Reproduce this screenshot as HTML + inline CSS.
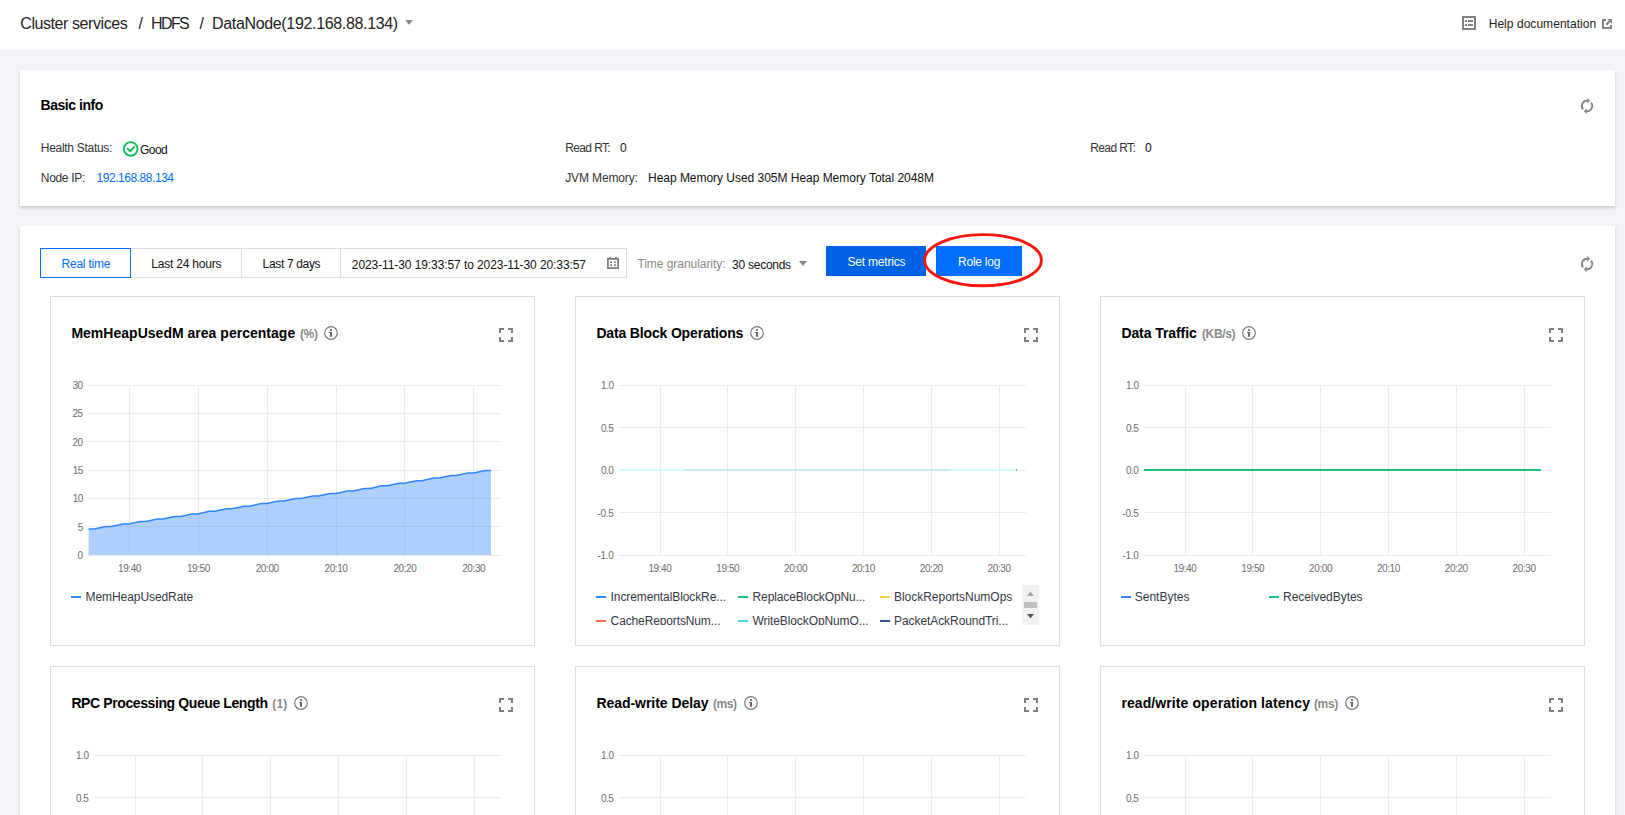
<!DOCTYPE html>
<html lang="en">
<head>
<meta charset="utf-8">
<title>DataNode(192.168.88.134) - HDFS - Cluster services</title>
<style>
html,body{margin:0;padding:0}
body{width:1625px;height:815px;overflow:hidden;position:relative;background:#f2f4f8;font-family:"Liberation Sans", Arial, sans-serif;font-size:12px;color:#000}
header.top{position:absolute;left:0;top:0;width:1625px;height:50px;background:#fff}
.card{position:absolute;background:#fff;box-shadow:0 2px 3px 0 rgba(20,22,30,.2)}
.layer{position:absolute;left:0;top:0;width:0;height:0}
.t{position:absolute;white-space:pre;line-height:1;margin:0}
.ico{position:absolute;overflow:visible}
.seg{position:absolute;box-sizing:border-box;border:1px solid #dddddd;background:#fff}
.segsep{position:absolute;width:1px;height:30px;background:#dddddd}
.segsel{position:absolute;box-sizing:border-box;border:1px solid #006eff;background:#fff}
.btn{position:absolute}
.panel{position:absolute;box-sizing:border-box;width:485px;height:350px;border:1px solid #dddddd;background:#fff}
.lm{position:absolute;width:10px;height:2px}
.legclip{position:absolute;overflow:hidden}
.legclip .t,.legclip .lm{margin-left:-590px;margin-top:-585px}
.sb{position:absolute;right:0;top:0;width:17px;height:40px;background:#f1f1f1}
</style>
</head>
<body>
<header class="top">
<span class="t" style="left:20.30px;top:16px;font-size:16px;color:#222;letter-spacing:-0.427px;">Cluster services</span>
<span class="t" style="left:138.50px;top:16px;font-size:16px;color:#222;">/</span>
<span class="t" style="left:151.00px;top:16px;font-size:16px;color:#222;letter-spacing:-1.589px;">HDFS</span>
<span class="t" style="left:199.50px;top:16px;font-size:16px;color:#222;">/</span>
<span class="t" style="left:212.00px;top:16px;font-size:16px;color:#222;letter-spacing:-0.337px;">DataNode(192.168.88.134)</span>
<svg class="ico" style="left:405px;top:20px" width="8" height="5" viewBox="0 0 8 5"><path d="M0 0H8L4 4.7Z" fill="#888"/></svg>
<svg class="ico" style="left:1462px;top:16px" width="14" height="14" viewBox="0 0 14 14"><rect x="1" y="1" width="12" height="12" fill="none" stroke="#808080" stroke-width="2"/><rect x="3" y="4" width="2" height="2" fill="#808080"/><rect x="6" y="4" width="5" height="2" fill="#808080"/><rect x="3" y="8" width="2" height="2" fill="#808080"/><rect x="6" y="8" width="5" height="2" fill="#808080"/></svg>
<span class="t" style="left:1488.70px;top:18px;font-size:12px;color:#222;letter-spacing:0.044px;">Help documentation</span>
<svg class="ico" style="left:1602px;top:19px" width="10" height="10" viewBox="0 0 10 10"><path d="M4 1H1V9H9V6" fill="none" stroke="#808080" stroke-width="2"/><path d="M5.3 0H10V4.7Z" fill="#808080"/><path d="M8.6 1.4L4.2 5.8" stroke="#808080" stroke-width="2" fill="none"/></svg>
</header>
<section class="card" style="left:20px;top:70px;width:1595px;height:136px"></section>
<section class="layer">
<span class="t" style="left:40.60px;top:98px;font-size:14px;color:#000;font-weight:700;letter-spacing:-0.474px;">Basic info</span>
<span class="t" style="left:40.80px;top:142px;font-size:12px;color:#333;letter-spacing:-0.294px;">Health Status:</span>
<svg class="ico" style="left:122px;top:140px" width="18" height="18" viewBox="0 0 18 18"><circle cx="8.7" cy="8.9" r="6.85" fill="none" stroke="#0abf5b" stroke-width="1.8"/><path d="M5.7 8.9L8.1 11.2L12.1 6.9" fill="none" stroke="#0abf5b" stroke-width="2" stroke-linecap="round" stroke-linejoin="round"/></svg>
<span class="t" style="left:140.00px;top:144px;font-size:12px;color:#111;letter-spacing:-0.531px;">Good</span>
<span class="t" style="left:40.80px;top:172px;font-size:12px;color:#333;letter-spacing:-0.320px;">Node IP:</span>
<span class="t" style="left:96.50px;top:172px;font-size:12px;color:#006eff;letter-spacing:-0.453px;">192.168.88.134</span>
<span class="t" style="left:565.20px;top:142px;font-size:12px;color:#333;letter-spacing:-0.615px;">Read RT:</span>
<span class="t" style="left:620.00px;top:142px;font-size:12px;color:#111;">0</span>
<span class="t" style="left:565.20px;top:172px;font-size:12px;color:#333;letter-spacing:-0.125px;">JVM Memory:</span>
<span class="t" style="left:648.00px;top:172px;font-size:12px;color:#111;letter-spacing:-0.028px;">Heap Memory Used 305M Heap Memory Total 2048M</span>
<span class="t" style="left:1090.20px;top:142px;font-size:12px;color:#333;letter-spacing:-0.602px;">Read RT:</span>
<span class="t" style="left:1145.00px;top:142px;font-size:12px;color:#111;">0</span>
<svg class="ico" style="left:0;top:0" width="1625" height="815"><g fill="none" stroke="#858585" stroke-width="1.9"><path d="M1583.02 109.34A5.20 5.20 0 0 1 1587.40 100.80"/><path d="M1590.98 102.66A5.20 5.20 0 0 1 1586.60 111.20"/></g><path d="M1587.20 97.90V103.70L1590.10 100.80Z" fill="#868686"/><path d="M1586.80 108.30V114.10L1583.90 111.20Z" fill="#868686"/></svg>
</section>
<section class="card" style="left:20px;top:226px;width:1595px;height:620px"></section>
<section class="layer">
<div class="seg" style="left:40px;top:248px;width:587px;height:30px"></div>
<div class="segsep" style="left:241px;top:248px"></div><div class="segsep" style="left:340px;top:248px"></div>
<div class="segsel" style="left:40px;top:248px;width:91px;height:30px"></div>
<span class="t" style="left:61.60px;top:258px;font-size:12px;color:#006eff;letter-spacing:-0.246px;">Real time</span>
<span class="t" style="left:151.30px;top:258px;font-size:12px;color:#111;letter-spacing:-0.210px;">Last 24 hours</span>
<span class="t" style="left:262.60px;top:258px;font-size:12px;color:#111;letter-spacing:-0.340px;">Last 7 days</span>
<span class="t" style="left:351.80px;top:259px;font-size:12px;color:#111;letter-spacing:-0.086px;">2023-11-30 19:33:57 to 2023-11-30 20:33:57</span>
<svg class="ico" style="left:607px;top:256px" width="12" height="13" viewBox="0 0 12 13"><rect x="0.9" y="2.9" width="10.2" height="9.2" fill="none" stroke="#808080" stroke-width="1.8"/><rect x="2" y="1" width="2" height="1.2" fill="#808080"/><rect x="8" y="1" width="2" height="1.2" fill="#808080"/><rect x="3.2" y="5.3" width="1.8" height="1.8" fill="#808080"/><rect x="7.1" y="5.3" width="1.8" height="1.8" fill="#808080"/><rect x="3.2" y="8.3" width="1.8" height="1.8" fill="#808080"/><rect x="7.1" y="8.3" width="1.8" height="1.8" fill="#808080"/></svg>
<span class="t" style="left:637.40px;top:258px;font-size:12px;color:#888;letter-spacing:-0.050px;">Time granularity:</span>
<span class="t" style="left:732.10px;top:259px;font-size:12px;color:#111;letter-spacing:-0.262px;">30 seconds</span>
<svg class="ico" style="left:798.6px;top:261px" width="8" height="5" viewBox="0 0 8 5"><path d="M0 0H8L4 4.9Z" fill="#888"/></svg>
<div class="btn" style="left:826px;top:246px;width:100px;height:30px;background:#0063e5"></div>
<div class="btn" style="left:936px;top:246px;width:86px;height:30px;background:#006eff"></div>
<span class="t" style="left:847.40px;top:256px;font-size:12px;color:#fff;letter-spacing:-0.192px;">Set metrics</span>
<span class="t" style="left:958.00px;top:256px;font-size:12px;color:#fff;letter-spacing:-0.231px;">Role log</span>
<svg class="ico" style="left:915px;top:226px" width="140" height="70" viewBox="915 226 140 70"><ellipse cx="983" cy="260.2" rx="58.4" ry="25.6" fill="none" stroke="#f8170f" stroke-width="2.9"/></svg>
<svg class="ico" style="left:0;top:0" width="1625" height="815"><g fill="none" stroke="#858585" stroke-width="1.9"><path d="M1583.02 267.34A5.20 5.20 0 0 1 1587.40 258.80"/><path d="M1590.98 260.66A5.20 5.20 0 0 1 1586.60 269.20"/></g><path d="M1587.20 255.90V261.70L1590.10 258.80Z" fill="#868686"/><path d="M1586.80 266.30V272.10L1583.90 269.20Z" fill="#868686"/></svg>
<div class="panel" style="left:50px;top:296px"></div><span class="t" style="left:71.40px;top:326px;font-size:14px;color:#000;font-weight:700;letter-spacing:0.018px;">MemHeapUsedM area percentage</span><span class="t" style="left:299.90px;top:328px;font-size:12px;color:#888;font-weight:700;letter-spacing:-0.309px;">(%)</span><svg class="ico" style="left:323.0px;top:325.0px" width="16" height="16" viewBox="0 0 16 16"><circle cx="8" cy="8" r="6.3" fill="none" stroke="#7d7d7d" stroke-width="1.2"/><rect x="7" y="4.2" width="2" height="1.7" fill="#666"/><path d="M5.9 6.9H9V11.7H7V7.9H5.9Z" fill="#666"/></svg><svg class="ico" style="left:499px;top:328px" width="14" height="14" viewBox="0 0 14 14"><path d="M1 5V1H5M9 1H13V5M13 9V13H9M5 13H1V9" fill="none" stroke="#7e7e7e" stroke-width="2"/></svg><svg class="ico" style="left:0;top:0" width="1625" height="815"><g fill="#ebebeb" shape-rendering="crispEdges"><rect x="88" y="385" width="413" height="1"/><rect x="88" y="413" width="413" height="1"/><rect x="88" y="441" width="413" height="1"/><rect x="88" y="470" width="413" height="1"/><rect x="88" y="498" width="413" height="1"/><rect x="88" y="526" width="413" height="1"/><rect x="88" y="555" width="413" height="1"/><rect x="129" y="385" width="1" height="171"/><rect x="198" y="385" width="1" height="171"/><rect x="267" y="385" width="1" height="171"/><rect x="336" y="385" width="1" height="171"/><rect x="404" y="385" width="1" height="171"/><rect x="473" y="385" width="1" height="171"/></g><path d="M88.6 529.1L94.1 529.1L105.9 526.6L111.4 526.6L123.1 524.0L128.6 524.0L140.4 521.5L145.9 521.5L157.6 519.0L163.1 519.0L174.9 516.4L180.4 516.4L192.1 513.9L197.6 513.9L209.4 511.3L214.9 511.3L226.7 508.8L232.2 508.8L243.9 506.2L249.4 506.2L261.2 503.6L266.7 503.6L278.4 501.1L283.9 501.1L295.7 498.6L301.2 498.6L312.9 496.0L318.4 496.0L330.2 493.4L335.7 493.4L347.4 490.9L352.9 490.9L364.7 488.4L370.2 488.4L382.0 485.8L387.5 485.8L399.2 483.2L404.7 483.2L416.5 480.7L422.0 480.7L433.7 478.1L439.2 478.1L451.0 475.6L456.5 475.6L468.2 473.1L473.7 473.1L485.5 470.5L491.0 470.5L491.0 555.0L88.6 555.0Z" fill="rgba(50,138,255,0.40)"/><path d="M88.6 529.1L94.1 529.1L105.9 526.6L111.4 526.6L123.1 524.0L128.6 524.0L140.4 521.5L145.9 521.5L157.6 519.0L163.1 519.0L174.9 516.4L180.4 516.4L192.1 513.9L197.6 513.9L209.4 511.3L214.9 511.3L226.7 508.8L232.2 508.8L243.9 506.2L249.4 506.2L261.2 503.6L266.7 503.6L278.4 501.1L283.9 501.1L295.7 498.6L301.2 498.6L312.9 496.0L318.4 496.0L330.2 493.4L335.7 493.4L347.4 490.9L352.9 490.9L364.7 488.4L370.2 488.4L382.0 485.8L387.5 485.8L399.2 483.2L404.7 483.2L416.5 480.7L422.0 480.7L433.7 478.1L439.2 478.1L451.0 475.6L456.5 475.6L468.2 473.1L473.7 473.1L485.5 470.5L491.0 470.5" fill="none" stroke="#2e87ff" stroke-width="1.5" stroke-linejoin="round"/></svg><span class="t" style="left:72.40px;top:381px;font-size:10px;color:#6c6c6c;letter-spacing:-0.350px;">30</span><span class="t" style="left:72.40px;top:409px;font-size:10px;color:#6c6c6c;letter-spacing:-0.350px;">25</span><span class="t" style="left:72.40px;top:438px;font-size:10px;color:#6c6c6c;letter-spacing:-0.350px;">20</span><span class="t" style="left:72.80px;top:466px;font-size:10px;color:#6c6c6c;letter-spacing:-0.617px;">15</span><span class="t" style="left:72.80px;top:494px;font-size:10px;color:#6c6c6c;letter-spacing:-0.617px;">10</span><span class="t" style="left:77.80px;top:523px;font-size:10px;color:#6c6c6c;">5</span><span class="t" style="left:77.60px;top:551px;font-size:10px;color:#6c6c6c;">0</span><span class="t" style="left:118.04px;top:564px;font-size:10px;color:#6c6c6c;letter-spacing:-0.407px;">19:40</span><span class="t" style="left:186.88px;top:564px;font-size:10px;color:#6c6c6c;letter-spacing:-0.407px;">19:50</span><span class="t" style="left:255.71px;top:564px;font-size:10px;color:#6c6c6c;letter-spacing:-0.407px;">20:00</span><span class="t" style="left:324.54px;top:564px;font-size:10px;color:#6c6c6c;letter-spacing:-0.407px;">20:10</span><span class="t" style="left:393.38px;top:564px;font-size:10px;color:#6c6c6c;letter-spacing:-0.407px;">20:20</span><span class="t" style="left:462.21px;top:564px;font-size:10px;color:#6c6c6c;letter-spacing:-0.407px;">20:30</span>
<div class="lm" style="left:71px;top:596px;background:#2f86ff"></div><span class="t" style="left:85.60px;top:591px;font-size:12px;color:#353844;letter-spacing:-0.077px;">MemHeapUsedRate</span>
<div class="panel" style="left:575px;top:296px"></div><span class="t" style="left:596.40px;top:326px;font-size:14px;color:#000;font-weight:700;letter-spacing:-0.159px;">Data Block Operations</span><svg class="ico" style="left:748.8px;top:325.0px" width="16" height="16" viewBox="0 0 16 16"><circle cx="8" cy="8" r="6.3" fill="none" stroke="#7d7d7d" stroke-width="1.2"/><rect x="7" y="4.2" width="2" height="1.7" fill="#666"/><path d="M5.9 6.9H9V11.7H7V7.9H5.9Z" fill="#666"/></svg><svg class="ico" style="left:1024px;top:328px" width="14" height="14" viewBox="0 0 14 14"><path d="M1 5V1H5M9 1H13V5M13 9V13H9M5 13H1V9" fill="none" stroke="#7e7e7e" stroke-width="2"/></svg><svg class="ico" style="left:0;top:0" width="1625" height="815"><g fill="#ebebeb" shape-rendering="crispEdges"><rect x="619" y="385" width="407" height="1"/><rect x="619" y="427" width="407" height="1"/><rect x="619" y="470" width="407" height="1"/><rect x="619" y="512" width="407" height="1"/><rect x="619" y="555" width="407" height="1"/><rect x="660" y="385" width="1" height="171"/><rect x="727" y="385" width="1" height="171"/><rect x="795" y="385" width="1" height="171"/><rect x="863" y="385" width="1" height="171"/><rect x="931" y="385" width="1" height="171"/><rect x="999" y="385" width="1" height="171"/></g><path d="M619.0 470.0H1016.0" stroke="#ccfefe" stroke-width="2"/><path d="M685.0 470.0H949.5" stroke="#c4eafa" stroke-width="2"/><rect x="1016.0" y="469.0" width="1" height="2" fill="#8a96b8"/></svg><span class="t" style="left:601.10px;top:381px;font-size:10px;color:#6c6c6c;letter-spacing:-0.522px;">1.0</span><span class="t" style="left:600.90px;top:424px;font-size:10px;color:#6c6c6c;letter-spacing:-0.443px;">0.5</span><span class="t" style="left:600.90px;top:466px;font-size:10px;color:#6c6c6c;letter-spacing:-0.443px;">0.0</span><span class="t" style="left:597.30px;top:509px;font-size:10px;color:#6c6c6c;letter-spacing:-0.238px;">-0.5</span><span class="t" style="left:597.50px;top:551px;font-size:10px;color:#6c6c6c;letter-spacing:-0.296px;">-1.0</span><span class="t" style="left:648.44px;top:564px;font-size:10px;color:#6c6c6c;letter-spacing:-0.407px;">19:40</span><span class="t" style="left:716.27px;top:564px;font-size:10px;color:#6c6c6c;letter-spacing:-0.407px;">19:50</span><span class="t" style="left:784.11px;top:564px;font-size:10px;color:#6c6c6c;letter-spacing:-0.407px;">20:00</span><span class="t" style="left:851.94px;top:564px;font-size:10px;color:#6c6c6c;letter-spacing:-0.407px;">20:10</span><span class="t" style="left:919.77px;top:564px;font-size:10px;color:#6c6c6c;letter-spacing:-0.407px;">20:20</span><span class="t" style="left:987.61px;top:564px;font-size:10px;color:#6c6c6c;letter-spacing:-0.407px;">20:30</span>
<div class="legclip" style="left:590px;top:585px;width:449px;height:40px">
<div class="sb"><svg width="17" height="40" viewBox="0 0 17 40"><path d="M5 11L8.5 6.8L12 11Z" fill="#a3a3a3"/><rect x="2" y="17" width="13" height="6" fill="#c1c1c1"/><path d="M5 29L8.5 33.2L12 29Z" fill="#505050"/></svg></div>
<div class="lm" style="left:596px;top:596px;background:#2f86ff"></div><span class="t" style="left:610.60px;top:591px;font-size:12px;color:#353844;letter-spacing:-0.097px;">IncrementalBlockRe...</span>
<div class="lm" style="left:738px;top:596px;background:#1dc47e"></div><span class="t" style="left:752.50px;top:591px;font-size:12px;color:#353844;letter-spacing:-0.099px;">ReplaceBlockOpNu...</span>
<div class="lm" style="left:880px;top:596px;background:#f7cf4b"></div><span class="t" style="left:894.00px;top:591px;font-size:12px;color:#353844;letter-spacing:-0.024px;">BlockReportsNumOps</span>
<div class="lm" style="left:596px;top:620px;background:#ff6e4a"></div><span class="t" style="left:610.60px;top:615px;font-size:12px;color:#353844;letter-spacing:-0.128px;">CacheReportsNum...</span>
<div class="lm" style="left:738px;top:620px;background:#46d0e0"></div><span class="t" style="left:752.50px;top:615px;font-size:12px;color:#353844;letter-spacing:-0.098px;">WriteBlockOpNumO...</span>
<div class="lm" style="left:880px;top:620px;background:#3b4f95"></div><span class="t" style="left:894.00px;top:615px;font-size:12px;color:#353844;letter-spacing:-0.072px;">PacketAckRoundTri...</span>
</div>
<div class="panel" style="left:1100px;top:296px"></div><span class="t" style="left:1121.40px;top:326px;font-size:14px;color:#000;font-weight:700;letter-spacing:-0.083px;">Data Traffic</span><span class="t" style="left:1202.00px;top:328px;font-size:12px;color:#888;font-weight:700;letter-spacing:-0.372px;">(KB/s)</span><svg class="ico" style="left:1241.1px;top:325.0px" width="16" height="16" viewBox="0 0 16 16"><circle cx="8" cy="8" r="6.3" fill="none" stroke="#7d7d7d" stroke-width="1.2"/><rect x="7" y="4.2" width="2" height="1.7" fill="#666"/><path d="M5.9 6.9H9V11.7H7V7.9H5.9Z" fill="#666"/></svg><svg class="ico" style="left:1549px;top:328px" width="14" height="14" viewBox="0 0 14 14"><path d="M1 5V1H5M9 1H13V5M13 9V13H9M5 13H1V9" fill="none" stroke="#7e7e7e" stroke-width="2"/></svg><svg class="ico" style="left:0;top:0" width="1625" height="815"><g fill="#ebebeb" shape-rendering="crispEdges"><rect x="1144" y="385" width="407" height="1"/><rect x="1144" y="427" width="407" height="1"/><rect x="1144" y="470" width="407" height="1"/><rect x="1144" y="512" width="407" height="1"/><rect x="1144" y="555" width="407" height="1"/><rect x="1185" y="385" width="1" height="171"/><rect x="1252" y="385" width="1" height="171"/><rect x="1320" y="385" width="1" height="171"/><rect x="1388" y="385" width="1" height="171"/><rect x="1456" y="385" width="1" height="171"/><rect x="1524" y="385" width="1" height="171"/></g><path d="M1144.0 470.0H1541.0" stroke="#19c37a" stroke-width="2"/></svg><span class="t" style="left:1126.10px;top:381px;font-size:10px;color:#6c6c6c;letter-spacing:-0.523px;">1.0</span><span class="t" style="left:1125.90px;top:424px;font-size:10px;color:#6c6c6c;letter-spacing:-0.443px;">0.5</span><span class="t" style="left:1125.90px;top:466px;font-size:10px;color:#6c6c6c;letter-spacing:-0.443px;">0.0</span><span class="t" style="left:1122.30px;top:509px;font-size:10px;color:#6c6c6c;letter-spacing:-0.238px;">-0.5</span><span class="t" style="left:1122.50px;top:551px;font-size:10px;color:#6c6c6c;letter-spacing:-0.296px;">-1.0</span><span class="t" style="left:1173.44px;top:564px;font-size:10px;color:#6c6c6c;letter-spacing:-0.407px;">19:40</span><span class="t" style="left:1241.27px;top:564px;font-size:10px;color:#6c6c6c;letter-spacing:-0.407px;">19:50</span><span class="t" style="left:1309.11px;top:564px;font-size:10px;color:#6c6c6c;letter-spacing:-0.407px;">20:00</span><span class="t" style="left:1376.94px;top:564px;font-size:10px;color:#6c6c6c;letter-spacing:-0.407px;">20:10</span><span class="t" style="left:1444.77px;top:564px;font-size:10px;color:#6c6c6c;letter-spacing:-0.407px;">20:20</span><span class="t" style="left:1512.61px;top:564px;font-size:10px;color:#6c6c6c;letter-spacing:-0.407px;">20:30</span>
<div class="lm" style="left:1121px;top:596px;background:#2f86ff"></div><span class="t" style="left:1134.80px;top:591px;font-size:12px;color:#353844;letter-spacing:-0.012px;">SentBytes</span>
<div class="lm" style="left:1269px;top:596px;background:#1dc47e"></div><span class="t" style="left:1283.00px;top:591px;font-size:12px;color:#353844;letter-spacing:-0.036px;">ReceivedBytes</span>
<div class="panel" style="left:50px;top:666px"></div><span class="t" style="left:71.40px;top:696px;font-size:14px;color:#000;font-weight:700;letter-spacing:-0.398px;">RPC Processing Queue Length</span><span class="t" style="left:272.30px;top:698px;font-size:12px;color:#888;font-weight:700;letter-spacing:0.171px;">(1)</span><svg class="ico" style="left:292.9px;top:695.0px" width="16" height="16" viewBox="0 0 16 16"><circle cx="8" cy="8" r="6.3" fill="none" stroke="#7d7d7d" stroke-width="1.2"/><rect x="7" y="4.2" width="2" height="1.7" fill="#666"/><path d="M5.9 6.9H9V11.7H7V7.9H5.9Z" fill="#666"/></svg><svg class="ico" style="left:499px;top:698px" width="14" height="14" viewBox="0 0 14 14"><path d="M1 5V1H5M9 1H13V5M13 9V13H9M5 13H1V9" fill="none" stroke="#7e7e7e" stroke-width="2"/></svg><svg class="ico" style="left:0;top:0" width="1625" height="815"><g fill="#ebebeb" shape-rendering="crispEdges"><rect x="94" y="755" width="407" height="1"/><rect x="94" y="797" width="407" height="1"/><rect x="94" y="840" width="407" height="1"/><rect x="94" y="882" width="407" height="1"/><rect x="94" y="925" width="407" height="1"/><rect x="135" y="755" width="1" height="171"/><rect x="202" y="755" width="1" height="171"/><rect x="270" y="755" width="1" height="171"/><rect x="338" y="755" width="1" height="171"/><rect x="406" y="755" width="1" height="171"/><rect x="474" y="755" width="1" height="171"/></g></svg><span class="t" style="left:76.10px;top:751px;font-size:10px;color:#6c6c6c;letter-spacing:-0.523px;">1.0</span><span class="t" style="left:75.90px;top:794px;font-size:10px;color:#6c6c6c;letter-spacing:-0.443px;">0.5</span>
<div class="panel" style="left:575px;top:666px"></div><span class="t" style="left:596.40px;top:696px;font-size:14px;color:#000;font-weight:700;letter-spacing:-0.041px;">Read-write Delay</span><span class="t" style="left:713.10px;top:698px;font-size:12px;color:#888;font-weight:700;letter-spacing:-0.498px;">(ms)</span><svg class="ico" style="left:742.8px;top:695.0px" width="16" height="16" viewBox="0 0 16 16"><circle cx="8" cy="8" r="6.3" fill="none" stroke="#7d7d7d" stroke-width="1.2"/><rect x="7" y="4.2" width="2" height="1.7" fill="#666"/><path d="M5.9 6.9H9V11.7H7V7.9H5.9Z" fill="#666"/></svg><svg class="ico" style="left:1024px;top:698px" width="14" height="14" viewBox="0 0 14 14"><path d="M1 5V1H5M9 1H13V5M13 9V13H9M5 13H1V9" fill="none" stroke="#7e7e7e" stroke-width="2"/></svg><svg class="ico" style="left:0;top:0" width="1625" height="815"><g fill="#ebebeb" shape-rendering="crispEdges"><rect x="619" y="755" width="407" height="1"/><rect x="619" y="797" width="407" height="1"/><rect x="619" y="840" width="407" height="1"/><rect x="619" y="882" width="407" height="1"/><rect x="619" y="925" width="407" height="1"/><rect x="660" y="755" width="1" height="171"/><rect x="727" y="755" width="1" height="171"/><rect x="795" y="755" width="1" height="171"/><rect x="863" y="755" width="1" height="171"/><rect x="931" y="755" width="1" height="171"/><rect x="999" y="755" width="1" height="171"/></g></svg><span class="t" style="left:601.10px;top:751px;font-size:10px;color:#6c6c6c;letter-spacing:-0.522px;">1.0</span><span class="t" style="left:600.90px;top:794px;font-size:10px;color:#6c6c6c;letter-spacing:-0.443px;">0.5</span>
<div class="panel" style="left:1100px;top:666px"></div><span class="t" style="left:1121.40px;top:696px;font-size:14px;color:#000;font-weight:700;letter-spacing:0.096px;">read/write operation latency</span><span class="t" style="left:1314.00px;top:698px;font-size:12px;color:#888;font-weight:700;letter-spacing:-0.384px;">(ms)</span><svg class="ico" style="left:1343.6px;top:695.0px" width="16" height="16" viewBox="0 0 16 16"><circle cx="8" cy="8" r="6.3" fill="none" stroke="#7d7d7d" stroke-width="1.2"/><rect x="7" y="4.2" width="2" height="1.7" fill="#666"/><path d="M5.9 6.9H9V11.7H7V7.9H5.9Z" fill="#666"/></svg><svg class="ico" style="left:1549px;top:698px" width="14" height="14" viewBox="0 0 14 14"><path d="M1 5V1H5M9 1H13V5M13 9V13H9M5 13H1V9" fill="none" stroke="#7e7e7e" stroke-width="2"/></svg><svg class="ico" style="left:0;top:0" width="1625" height="815"><g fill="#ebebeb" shape-rendering="crispEdges"><rect x="1144" y="755" width="407" height="1"/><rect x="1144" y="797" width="407" height="1"/><rect x="1144" y="840" width="407" height="1"/><rect x="1144" y="882" width="407" height="1"/><rect x="1144" y="925" width="407" height="1"/><rect x="1185" y="755" width="1" height="171"/><rect x="1252" y="755" width="1" height="171"/><rect x="1320" y="755" width="1" height="171"/><rect x="1388" y="755" width="1" height="171"/><rect x="1456" y="755" width="1" height="171"/><rect x="1524" y="755" width="1" height="171"/></g></svg><span class="t" style="left:1126.10px;top:751px;font-size:10px;color:#6c6c6c;letter-spacing:-0.523px;">1.0</span><span class="t" style="left:1125.90px;top:794px;font-size:10px;color:#6c6c6c;letter-spacing:-0.443px;">0.5</span>
</section>
</body>
</html>
